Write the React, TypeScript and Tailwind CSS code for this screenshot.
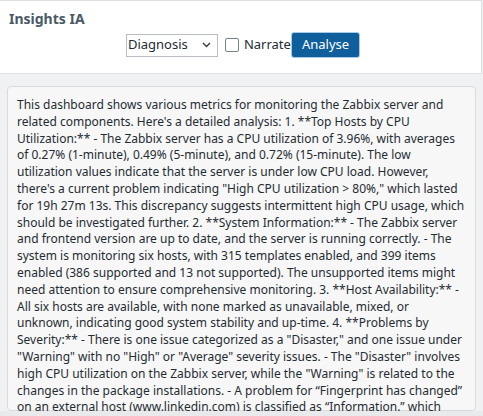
import React from "react";

const textA =
  "This dashboard shows various metrics for monitoring the Zabbix server and related components. Here's a detailed analysis: 1. **Top Hosts by CPU Utilization:** - The Zabbix server has a CPU utilization of 3.96%, with averages of 0.27% (1-minute), 0.49% (5-minute), and 0.72% (15-minute). The low utilization values indicate that the server is under low CPU load. However, there's a current problem indicating \"High CPU utilization > 80%,\" which lasted for 19h 27m 13s. This discrepancy suggests intermittent high CPU usage, which should be investigated further. 2. **System Information:** - The Zabbix server and frontend version are up to date, and the server is running correctly. - The system is monitoring six hosts, with 315 templates enabled, and 399 items enabled (386 supported and 13 not supported). The unsupported items might need attention to ensure comprehensive monitoring. 3. **Host Availability:** - All six hosts are available, with none marked as unavailable, mixed, or unknown, indicating good system stability and up-time. 4. **Problems by Severity:** - There is one issue categorized as a \"Disaster,\" and one issue under \"Warning\" with no \"High\" or \"Average\" severity issues. - The \"Disaster\" involves high CPU utilization on the Zabbix server, while the \"Warning\" is related to the changes in the package installations. - A problem for \u201cFingerprint has changed\u201d on an external host (www.linkedin.com) is classified as \u201cInformation.\u201d which";
const textB = "is a low-priority issue that can be looked at later.";

export default function App() {
  return (
    <div
      className="w-[483px] h-[416px] overflow-hidden bg-[#f0f1f2] flex flex-col"
      style={{ fontFamily: '"Noto Sans", "Open Sans", sans-serif' }}
    >
      <div className="h-[74px] shrink-0 bg-white border-t border-b border-r border-[#dce1e4] w-[482px] flex flex-col">
        <div className="pl-[9px] pt-[8px] text-[14px] font-bold text-[#4a5a65] leading-[20px]">
          Insights IA
        </div>
        <div className="flex items-center justify-center mt-[4px] pl-[4px]">
          <div className="w-[92px] h-[23px] border border-[#b6bec4] bg-white flex items-center justify-between pl-[1px] pr-[6px] text-[13px] text-[#1f2c33]">
            <span>Diagnosis</span>
            <svg width="9" height="6" viewBox="0 0 9 6" fill="none">
              <path d="M1 1l3.5 3.5L8 1" stroke="#333" strokeWidth="1.3" />
            </svg>
          </div>
          <div className="ml-[7px] w-[14px] h-[14px] border-[1.5px] border-[#76828b] rounded-[2px] bg-white" />
          <span className="ml-[5px] text-[13px] text-[#1f2c33]">Narrate</span>
          <button className="ml-[1px] h-[24px] px-[10px] bg-[#0f5f9c] text-white text-[13px] rounded-[2px] ring-1 ring-[#a9cbe6]">
            Analyse
          </button>
        </div>
      </div>
      <div className="flex-1 overflow-hidden px-[7px] pt-[12px]">
        <div className="h-full border border-[#d7dbde] rounded-[4px] bg-[#f7f7f7] pl-[9px] pr-[8px] pt-[10px] text-[12px] leading-[16.8px] text-[#1f2c33]">
          {textA}
          <br />
          {textB}
        </div>
      </div>
      <div className="h-[5px] shrink-0 bg-[#e8eaeb]" />
    </div>
  );
}
